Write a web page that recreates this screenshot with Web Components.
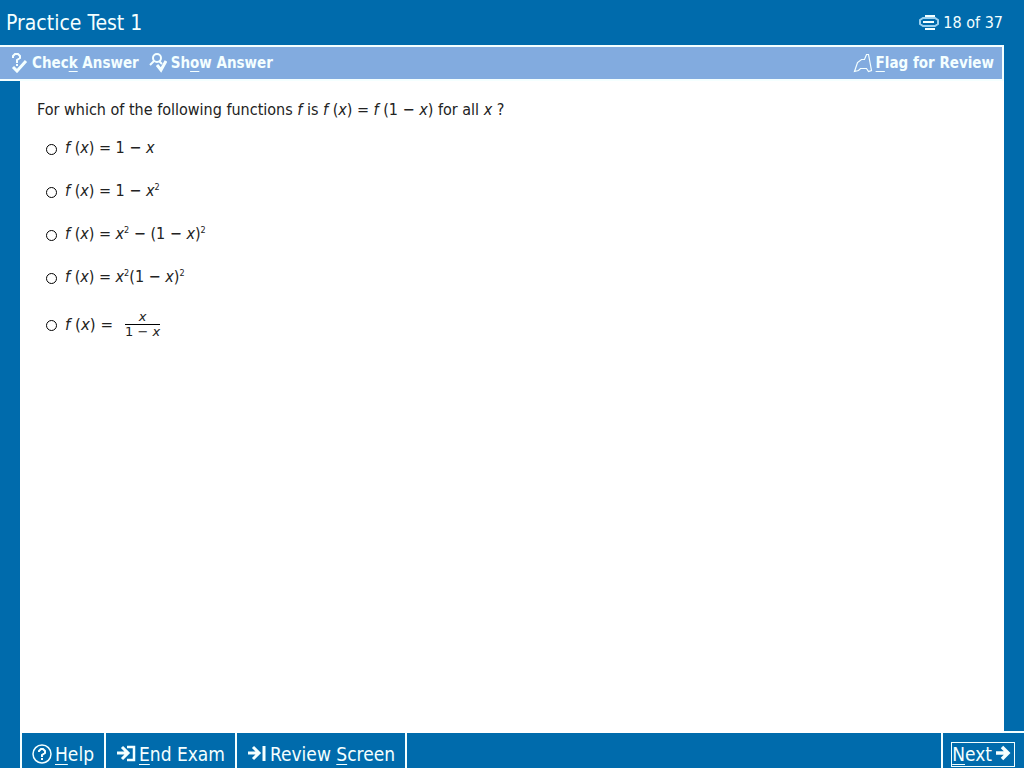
<!DOCTYPE html>
<html lang="en">
<head>
<meta charset="utf-8">
<title>Practice Test 1</title>
<style>
  html, body {
    height: 100%;
    margin: 0;
  }
  body {
    --blue: #006bac;
    --bar: #82abdf;
    --line: #f4ffff;
    font-family: "DejaVu Sans Condensed", "Noto Sans", sans-serif;
    background: #006bac;
  }
</style>
</head>
<body>
<exam-shell>
  <exam-header slot="header" current="18" total="37">Practice Test 1</exam-header>
  <tool-bar slot="tools">
    <icon-button icon="check">Chec<u>k</u> Answer</icon-button>
    <icon-button icon="show">Sh<u>o</u>w Answer</icon-button>
    <icon-button slot="end" icon="flag"><u>F</u>lag for Review</icon-button>
  </tool-bar>
  <exam-question></exam-question>
  <nav-bar slot="footer">
    <icon-button icon="help"><u>H</u>elp</icon-button>
    <icon-button icon="end"><u>E</u>nd Exam</icon-button>
    <icon-button icon="review">Review <u>S</u>creen</icon-button>
    <icon-button slot="end" icon="next"><u>N</u>ext</icon-button>
  </nav-bar>
</exam-shell>

<script>
function attach(element, html) {
  const template = document.createElement('template');
  template.innerHTML = html;
  element.attachShadow({ mode: 'open' });
  element.shadowRoot.appendChild(template.content.cloneNode(true));
}

const icons = {
  check: `<svg width="17" height="20" viewBox="0 0 17 20" fill="none" stroke="currentColor" stroke-width="2">
            <path d="M2 5V3l2-2h3l2 2v2L6 7v3"/><path d="M5 12h2"/><path d="M2 14l4 4L15 8" stroke-width="3"/>
          </svg>`,
  show: `<svg width="18" height="20" viewBox="0 0 18 20" fill="none" stroke="currentColor" stroke-width="2">
           <circle cx="8" cy="5" r="4"/><path d="M5 8l-4 4M10 8l3 3"/><path d="M8 12l4 5 5-9" stroke-width="3"/>
         </svg>`,
  flag: `<svg width="20" height="20" viewBox="0 0 20 20" fill="none" stroke="currentColor" stroke-width="1.200">
           <path d="M1.500 18.500L4.500 9.500L8.500 6.500H11.500L13.500 1.500H15.500L18.500 17.500L15.500 18.500L13.500 15.500H7.500L5.500 17.500Z"/>
         </svg>`,
  help: `<svg width="20" height="20" viewBox="0 0 20 20" fill="none" stroke="currentColor">
           <circle cx="10" cy="10" r="9" stroke-width="1.500"/>
           <path d="M7 8V7l2-2h2l2 2v2l-3 2v2M9 15h2" stroke-width="2"/>
         </svg>`,
  end: `<svg width="20" height="18" viewBox="0 0 20 18" fill="none" stroke="currentColor" stroke-width="3">
          <path d="M1 8h11M6 2l6 6-6 6"/><path d="M11 2h7v13h-7" stroke-width="2.500"/>
        </svg>`,
  review: `<svg width="20" height="18" viewBox="0 0 20 18" fill="none" stroke="currentColor" stroke-width="3">
             <path d="M1 8h10M6 2l6 6-6 6M17 1v15"/>
           </svg>`,
  next: `<svg width="19" height="18" viewBox="0 0 19 18" fill="none" stroke="currentColor" stroke-width="3.500">
           <path d="M1 8h12M7 2l6 6-6 6"/>
         </svg>`
};

class ExamShell extends HTMLElement {
  constructor() {
    super();
    attach(this, `
      <style>
        :host {
          display: flex;
          flex-direction: column;
          min-height: 100vh;
          background: var(--blue);
        }
        .middle {
          display: flex;
          flex: 1;
          padding-left: 20px;
        }
        main {
          flex: 1;
          background: #fff;
        }
        .rail {
          width: 20px;
          border-bottom: 2px solid var(--line);
        }
      </style>
      <slot name="header"></slot>
      <slot name="tools"></slot>
      <div class="middle">
        <main><slot></slot></main>
        <div class="rail"></div>
      </div>
      <slot name="footer"></slot>`);
  }
}

class ExamHeader extends HTMLElement {
  constructor() {
    super();
    attach(this, `
      <style>
        :host {
          display: flex;
          align-items: center;
          justify-content: space-between;
          height: 45px;
          padding: 0 21px 0 6px;
          color: var(--line);
        }
        h1 {
          margin: 0;
          font-size: 21px;
          font-weight: normal;
          line-height: 24px;
        }
        .progress {
          display: flex;
          align-items: center;
          gap: 4px;
          font-size: 16px;
        }
      </style>
      <h1><slot></slot></h1>
      <div class="progress">
        <svg width="20" height="15" viewBox="0 0 20 15" fill="none" stroke="currentColor">
          <path d="M6 1h10M4 7h11M6 14h10" stroke-width="2"/>
          <path d="M16 3H4L1 5v4l3 2h12l3-2V5z" stroke="#9bd0ef" stroke-width="2"/>
        </svg>
        <span class="count"></span>
      </div>`);
  }

  connectedCallback() {
    this.shadowRoot.querySelector('.count').textContent =
      `${this.getAttribute('current')} of ${this.getAttribute('total')}`;
  }
}

class ToolBar extends HTMLElement {
  constructor() {
    super();
    attach(this, `
      <style>
        :host {
          display: flex;
          align-items: center;
          gap: 10px;
          box-sizing: border-box;
          height: 36px;
          margin-right: 20px;
          padding: 0 8px 0 11px;
          border: 2px solid var(--line);
          border-left: 0;
          background: var(--bar);
          color: var(--line);
          font-size: 15px;
          font-weight: bold;
          line-height: 18px;
          --gap: 4px;
        }
        .end {
          margin-left: auto;
          --gap: 3px;
        }
      </style>
      <slot></slot>
      <div class="end"><slot name="end"></slot></div>`);
  }
}

class NavBar extends HTMLElement {
  constructor() {
    super();
    attach(this, `
      <style>
        :host {
          display: flex;
          height: 35px;
          color: var(--line);
          font-size: 19px;
          line-height: 23px;
          --gap: 3px;
        }
        ::slotted(icon-button) {
          padding: 7px 10px 0;
          border-right: 2px solid var(--line);
        }
        .start {
          display: flex;
          margin-left: 20px;
          border-left: 2px solid var(--line);
        }
        .end {
          display: flex;
          align-items: center;
          margin-left: auto;
          padding: 7px 9px 0 8px;
          border-left: 2px solid var(--line);
        }
        .end ::slotted(icon-button) {
          padding: 0;
          border: 1px solid var(--line);
        }
      </style>
      <div class="start"><slot></slot></div>
      <div class="end"><slot name="end"></slot></div>`);
  }
}

class IconButton extends HTMLElement {
  constructor() {
    super();
    attach(this, `
      <style>
        :host {
          display: flex;
        }
        button {
          display: flex;
          align-items: center;
          gap: var(--gap, 5px);
          padding: 0;
          border: 0;
          background: none;
          color: inherit;
          font: inherit;
          white-space: nowrap;
          cursor: pointer;
        }
        .icon {
          display: flex;
        }
        :host([icon="next"]) button {
          flex-direction: row-reverse;
        }
        ::slotted(u) {
          text-decoration-thickness: 1px;
          text-underline-offset: 3px;
        }
      </style>
      <button type="button"><span class="icon"></span><span><slot></slot></span></button>`);
  }

  connectedCallback() {
    this.shadowRoot.querySelector('.icon').innerHTML = icons[this.getAttribute('icon')];
  }
}

class ExamQuestion extends HTMLElement {
  constructor() {
    super();
    // radios share one root so that they stay in one group
    attach(this, `
      <style>
        :host {
          display: block;
          padding: 19px 17px;
          color: #222;
          font-size: 16px;
          line-height: 20px;
        }
        fieldset {
          margin: 0;
          padding: 0;
          border: 0;
        }
        legend {
          padding: 0;
          margin-bottom: 18px;
        }
        .choice {
          display: flex;
          align-items: center;
          gap: 8px;
          padding-left: 9px;
          margin-bottom: 23px;
        }
        input {
          appearance: none;
          box-sizing: border-box;
          width: 11px;
          height: 11px;
          margin: 2px 0 0;
          border: 1px solid #000;
          border-radius: 50%;
        }
        input:checked {
          background: radial-gradient(#000 40%, #fff 45%);
        }
        sup {
          font-size: 9px;
          line-height: 0;
          vertical-align: 6px;
        }
        .ratio {
          display: flex;
          align-items: center;
          gap: 12px;
          font-family: "DejaVu Sans", sans-serif;
          font-size: 15px;
        }
        .fraction {
          display: flex;
          flex-direction: column;
          text-align: center;
          font-size: 13px;
          line-height: 14px;
        }
        .fraction span:first-child {
          border-bottom: 1px solid #000;
        }
      </style>
      <fieldset>
        <legend>For which of the following functions <i>f</i> is <i>f</i> (<i>x</i>) = <i>f</i> (1 − <i>x</i>) for all <i>x</i> ?</legend>
        <div class="choice"><input type="radio" name="answer" id="a"><label for="a"><i>f</i> (<i>x</i>) = 1 − <i>x</i></label></div>
        <div class="choice"><input type="radio" name="answer" id="b"><label for="b"><i>f</i> (<i>x</i>) = 1 − <i>x</i><sup>2</sup></label></div>
        <div class="choice"><input type="radio" name="answer" id="c"><label for="c"><i>f</i> (<i>x</i>) = <i>x</i><sup>2</sup> − (1 − <i>x</i>)<sup>2</sup></label></div>
        <div class="choice"><input type="radio" name="answer" id="d"><label for="d"><i>f</i> (<i>x</i>) = <i>x</i><sup>2</sup>(1 − <i>x</i>)<sup>2</sup></label></div>
        <div class="choice"><input type="radio" name="answer" id="e"><label for="e" class="ratio"><span><i>f</i> (<i>x</i>) =</span><span class="fraction"><span><i>x</i></span><span>1 − <i>x</i></span></span></label></div>
      </fieldset>`);
  }
}

customElements.define('exam-shell', ExamShell);
customElements.define('exam-header', ExamHeader);
customElements.define('tool-bar', ToolBar);
customElements.define('nav-bar', NavBar);
customElements.define('icon-button', IconButton);
customElements.define('exam-question', ExamQuestion);
</script>
</body>
</html>
